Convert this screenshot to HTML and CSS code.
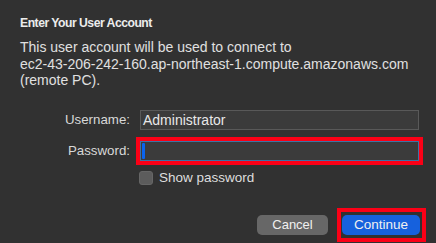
FILE: index.html
```html
<!DOCTYPE html>
<html>
<head>
<meta charset="utf-8">
<link rel="stylesheet" href="styles.css">
</head>
<body>
<div class="dialog">
  <h1 class="title">Enter Your User Account</h1>
  <p class="message">This user account will be used to connect to<br>ec2-43-206-242-160.ap-northeast-1.compute.amazonaws.com<br>(remote PC).</p>
  <div class="form">
    <label class="label">Username:</label>
    <div class="field">Administrator</div>
    <label class="label">Password:</label>
    <div class="field field-focus"><span class="caret"></span></div>
    <div></div>
    <div class="check-row"><span class="checkbox"></span><span class="check-text">Show password</span></div>
  </div>
  <div class="buttons">
    <button class="btn btn-cancel">Cancel</button>
    <span class="highlight"><button class="btn btn-primary">Continue</button></span>
  </div>
</div>
</body>
</html>
```
FILE: styles.css
```css
html, body {
  margin: 0;
  padding: 0;
  background: #313131;
  height: 100%;
}
body {
  font-family: "Liberation Sans", Arial, sans-serif;
  font-size: 13px;
  color: #e4e4e4;
}
.dialog {
  padding: 15px 10px 0 20px;
}
.title {
  margin: 0;
  font-size: 12.2px;
  line-height: 16px;
  font-weight: bold;
  letter-spacing: -0.5px;
  color: #ececec;
}
.message {
  margin: 8px 0 0 0;
  font-size: 14px;
  line-height: 16.5px;
  color: #e0e0e0;
}
.form {
  display: grid;
  grid-template-columns: 110px 279px;
  column-gap: 10px;
  row-gap: 11px;
  margin-top: 21px;
  align-items: center;
}
.label {
  text-align: right;
  color: #d8d8d8;
  font-size: 13.3px;
  line-height: 20px;
}
.field {
  box-sizing: border-box;
  height: 20px;
  background: #3b3b3b;
  border: 1px solid #595959;
  padding: 0 2px;
  font-size: 14px;
  line-height: 18px;
  color: #e8e8e8;
  display: flex;
  align-items: center;
}
.field-focus {
  border-color: #3d73a6;
  outline: 4px solid #fb0016;
  outline-offset: 0;
  padding-left: 1px;
}
.caret {
  display: block;
  width: 3px;
  height: 16px;
  background: #0a64f0;
  border-radius: 1px;
}
.check-row {
  display: flex;
  align-items: center;
  gap: 6px;
  margin-top: -2px;
  margin-left: -1px;
}
.checkbox {
  display: block;
  width: 14px;
  height: 14px;
  border-radius: 3px;
  background: #5c5c5c;
  border: 0.5px solid #666;
  box-sizing: border-box;
}
.check-text {
  color: #dedede;
  font-size: 13.5px;
  line-height: 16px;
}
.buttons {
  display: flex;
  justify-content: flex-end;
  align-items: center;
  gap: 9px;
  margin-top: 22px;
}
.btn {
  font-family: "Liberation Sans", Arial, sans-serif;
  font-size: 13px;
  height: 20px;
  border: none;
  border-radius: 5px;
  padding: 0;
  color: #f0f0f0;
  line-height: 20px;
}
.btn-cancel {
  width: 71px;
  background: #676767;
}
.btn-primary {
  width: 78px;
  background: #1661dd;
  display: block;
  font-size: 13.5px;
}
.highlight {
  display: block;
  border: 4px solid #fb0016;
  padding: 3px 2px 3px 1px;
}
```
